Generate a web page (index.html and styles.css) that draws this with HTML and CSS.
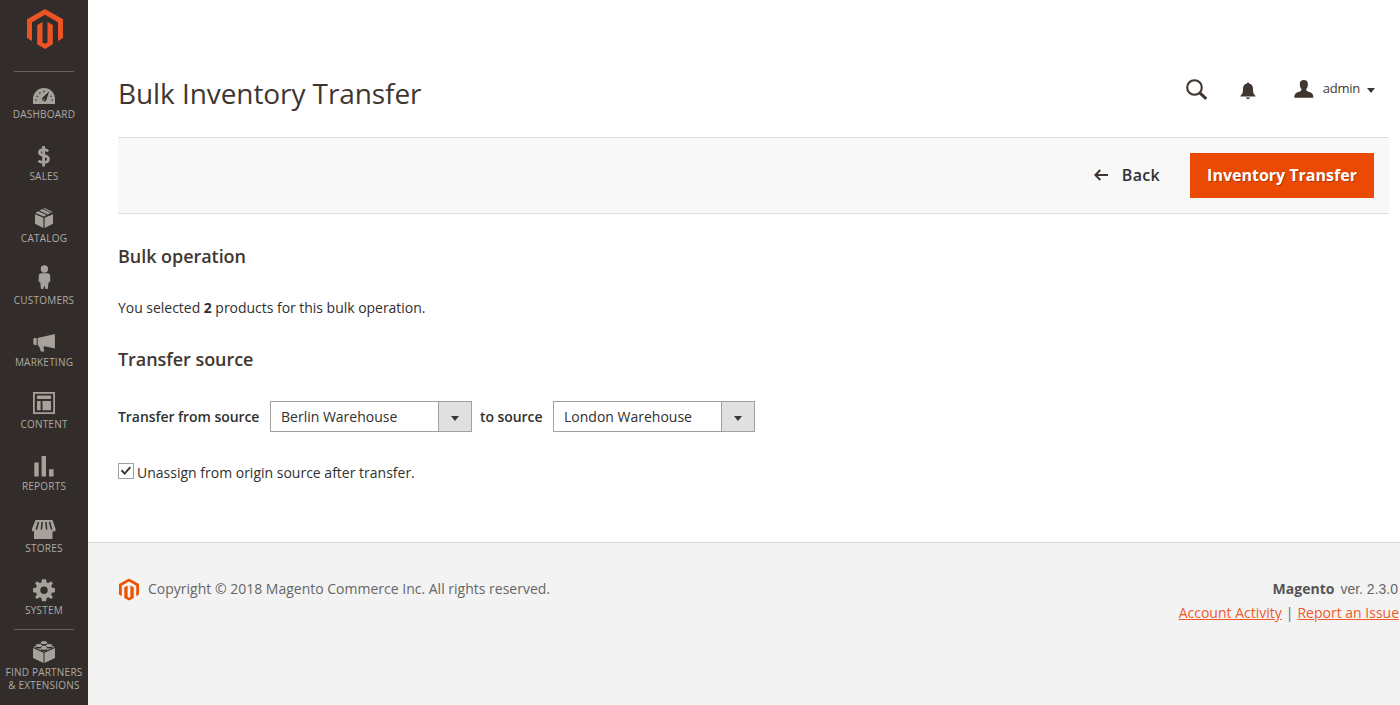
FILE: index.html
```html
<!DOCTYPE html>
<html lang="en">
<head>
<meta charset="utf-8">
<title>Bulk Inventory Transfer</title>
<link rel="stylesheet" href="styles.css">
</head>
<body>
<div class="page">
<aside class="sidebar">
  <a class="logo"><svg width="36" height="40" viewBox="0 0 36 40"><path d="M18 0 0 10.2V29l5 3V13.2L18 5.800l13 7.400V32l5-3V10.200Z"/><path d="m15.500 13-5.300 3.100V35.300L18 40l7.800-4.700V16.100L20.500 13v20.500L18 34.800l-2.500-1.300Z"/></svg></a>
  <nav class="menu">
    <a class="item"><svg viewBox="0 78 88 30"><path d="M33 104v-5a11 11 0 0 1 22 0v5Z"/><g class="cut"><path d="m49.200 91.300-3 9.300a2.400 2.400 0 0 1-4-2.500Z"/><circle cx="36" cy="100" r=".8"/><circle cx="37.200" cy="96.200" r=".8"/><circle cx="39.900" cy="93.100" r=".8"/><circle cx="44" cy="91.500" r=".8"/><circle cx="51" cy="96.200" r=".8"/><circle cx="52.100" cy="100" r=".8"/></g><circle cx="44" cy="99.700" r=".8"/></svg><span>DASHBOARD</span></a>
    <a class="item"><svg viewBox="0 140 88 30"><path class="dollar" d="M48.200 151.300c-1.100-1-2.700-1.600-4.500-1.600-2.700 0-4.200 1-4.200 2.700 0 4.200 8.900 1.800 8.900 6.600 0 2.300-1.800 3.500-4.700 3.500-2 0-4-.6-5.300-1.700M43.600 146v20.500"/></svg><span>SALES</span></a>
    <a class="item"><svg viewBox="0 202 88 30"><path d="m35 214.200 8.400 3.500V228l-8.400-4.200Zm18 0-8.400 3.500V228l8.400-4.200ZM35.300 212.900l3-1.700 8.100 3.900-2.400 1.500Zm4.300-2.500 2.500-1.300 8.300 3.900-2.700 1.400Zm3.800-2 1.300-.5 7.900 4.200-1.300.6Z"/></svg><span>CATALOG</span></a>
    <a class="item"><svg viewBox="0 264 88 30"><circle cx="44.400" cy="269" r="3.700"/><path d="M41.500 273.200h5.800c2 0 2.900 1.200 2.900 3v4.900c0 1-.8 1.500-1.600 1l-.8 6.900h-2.200l-1.200-3.600-1.200 3.600H41l-.8-6.900c-.8.500-1.500 0-1.500-1v-4.900c0-1.800.9-3 2.800-3Z"/></svg><span>CUSTOMERS</span></a>
    <a class="item"><svg viewBox="0 326 88 30"><path d="M33.300 339.500q0-1.400 1.500-1.400h1.900v6.900h-1.900q-1.500 0-1.500-1.400ZM37.700 338l17.200-4v14.400l-11.500-2.500.9 1.100-.9.800 1 3.800h-3.500l-2-5.900h-1.200Z"/></svg><span>MARKETING</span></a>
    <a class="item"><svg viewBox="0 388 88 30"><path fill-rule="evenodd" d="M33 392h22v22H33Zm1.800 1.800v18.400h18.400v-18.400Z"/><path d="M37 395.500h14v3.500H37Zm0 5.500h3.600v9.300H37Zm5.500 0H51v9.300h-8.500Z"/></svg><span>CONTENT</span></a>
    <a class="item"><svg viewBox="0 450 88 30"><path d="M34.300 462.500h4.400v14h-4.400Zm7.300-6.500H46v20.500h-4.400Zm7.400 13.200h4.600v7.300H49Z"/></svg><span>REPORTS</span></a>
    <a class="item"><svg viewBox="0 512 88 30"><path d="M35.500 520h17l3.200 9.200c0 2.500-2 2.500-3.200 2v7.800H34v-7.800c-1.500.5-2.200-.5-2.200-2Z"/><path class="awning" d="m38.500 522-2.200 7.500M42.200 522l-.8 7.500M45.900 522l.8 7.500M49.500 522l2.200 7.500"/></svg><span>STORES</span></a>
    <a class="item"><svg viewBox="0 574 88 30"><g transform="translate(44 590.200)"><path fill-rule="evenodd" d="M-2-11h4l.6 3.200 1.600.7L7-8.900 8.900-7 7.100-4.200l.7 1.600L11-2v4l-3.200.6-.7 1.600L8.900 7 7 8.900 4.200 7.100l-1.600.7L2 11h-4l-.6-3.200-1.600-.7L-7 8.900-8.900 7-7.100 4.200l-.7-1.600L-11 2v-4l3.200-.6.700-1.600L-8.900-7-7-8.900l2.800 1.800 1.600-.7ZM0-3.700A3.700 3.700 0 1 0 0 3.700 3.700 3.700 0 1 0 0-3.700Z"/></g></svg><span>SYSTEM</span></a>
    <a class="item partners"><svg viewBox="0 636 88 30"><path d="m33 648 10.500 4.800V663L33 658Zm22 0-10.500 4.800V663l10.500-5Z"/><path d="m33.400 647 10.600-5 10.600 5-10.600 4.800Z"/><g class="stud"><ellipse class="shade" cx="44" cy="644.200" rx="3.200" ry="1.600"/><ellipse cx="44" cy="642.600" rx="3" ry="1.500"/><ellipse class="shade" cx="38.700" cy="647" rx="3.200" ry="1.600"/><ellipse cx="38.700" cy="645.400" rx="3" ry="1.500"/><ellipse class="shade" cx="49.300" cy="647" rx="3.200" ry="1.600"/><ellipse cx="49.300" cy="645.400" rx="3" ry="1.500"/><ellipse class="shade" cx="44" cy="649.800" rx="3.200" ry="1.600"/><ellipse cx="44" cy="648.200" rx="3" ry="1.500"/></g></svg><span>FIND PARTNERS<br>&amp; EXTENSIONS</span></a>
  </nav>
</aside>
<div class="wrapper">
  <header class="header">
    <h1>Bulk Inventory Transfer</h1>
    <div class="tools">
      <svg class="search" width="22" height="22" viewBox="0 0 22 22"><circle cx="8.500" cy="8.500" r="7.300"/><path d="m13.800 13.800 6.500 6"/></svg>
      <svg class="bell" width="16" height="18" viewBox="0 0 16 18"><path d="M8 .5c.7 0 1.100.4 1.200 1C12 2.200 13 4.300 13 7c0 4 .8 5.300 2.500 6.700v.7H.5v-.7C2.200 12.300 3 11 3 7c0-2.700 1-4.800 3.800-5.500.1-.6.500-1 1.200-1Zm-2 15h4c-.3 1-1 1.700-2 1.700s-1.700-.7-2-1.700Z"/></svg>
      <svg class="user" width="20" height="18" viewBox="0 0 20 18"><path d="M9.800 0c2.800 0 4.300 1.700 4.100 4.500-.1 2-.7 3.600-1.600 4.600-.4 1.300.2 1.900 1.700 2.500 3.200 1.100 5.200 1.500 5.400 6.100H.3c.2-4.600 2.200-5 5.400-6.100 1.500-.6 2-1.200 1.700-2.500-.9-1-1.500-2.600-1.600-4.600C5.600 1.700 7 0 9.800 0Z"/></svg>
      <span class="admin">admin</span><i class="caret"></i>
    </div>
  </header>
  <div class="actions">
    <a class="back"><svg width="14" height="12" viewBox="0 0 14 12"><path d="M14 6H1.500M6.300 1 1.300 6l5 5"/></svg><span>Back</span></a>
    <button class="primary">Inventory Transfer</button>
  </div>
  <main class="content">
    <h2>Bulk operation</h2>
    <p>You selected <b>2</b> products for this bulk operation.</p>
    <h2 class="second">Transfer source</h2>
    <div class="row">
      <label class="from">Transfer from source</label>
      <div class="select"><span>Berlin Warehouse</span><div class="arrow"><i class="caret"></i></div></div>
      <label class="to">to source</label>
      <div class="select"><span>London Warehouse</span><div class="arrow"><i class="caret"></i></div></div>
    </div>
    <label class="unassign"><span class="box"><svg width="14" height="14" viewBox="0 0 14 14"><path d="m2.500 6.300 3.200 3.300 5.600-6.400"/></svg></span><span>Unassign from origin source after transfer.</span></label>
  </main>
  <footer class="footer">
    <div class="copy"><svg width="20" height="23" viewBox="0 0 36 40"><path d="M18 0 0 10.200V29l5 3V13.200L18 5.800l13 7.400V32l5-3V10.200Z"/><path d="m15.500 13-6 3.100V35.300L18 40l8.500-4.700V16.100l-6-3.100v20.500L18 34.800l-2.500-1.300Z"/></svg><span>Copyright © 2018 Magento Commerce Inc. All rights reserved.</span></div>
    <div class="legal"><div><strong>Magento</strong><span class="version">ver. 2.3.0</span></div><div class="links"><a>Account Activity</a><span class="bar">|</span><a>Report an Issue</a></div></div>
  </footer>
</div>
</div>
</body>
</html>
```
FILE: styles.css
```css
* { box-sizing: border-box; }
body { margin: 0; font: 14px/20px "Open Sans", sans-serif; color: #303030; background: #fff; }
h1, h2, p { margin: 0; }
svg { display: block; flex: none; }
.page { display: flex; width: 1400px; height: 705px; overflow: hidden; }
.sidebar { width: 88px; flex: none; background: #322d2a; color: #aeaaa4; }
.logo { display: flex; margin: 0 14px; padding: 8.500px 0 0 12.500px; height: 72px; border-bottom: 1px solid #66615d; }
.logo svg, .copy svg { fill: #eb5202; }
.logo svg { fill: #eb5424; }
.menu { padding-top: 6px; }
.item { display: block; height: 62px; font-size: 10px; line-height: 13px; letter-spacing: .22px; text-align: center; white-space: nowrap; }
.item svg { width: 88px; height: 30px; overflow: visible; fill: #a6a19b; }
.item .cut { fill: #322d2a; }
.item .dollar { fill: none; stroke: #a6a19b; stroke-width: 2.8; }
.item .awning { stroke: #322d2a; stroke-width: 1.5; }
.item .stud .shade { fill: #322d2a; }
.partners { position: relative; }
.partners::before { content: ""; position: absolute; left: 14px; right: 14px; top: -7px; height: 1px; background: #66615d; }
.wrapper { flex: 1; display: flex; flex-direction: column; min-width: 0; }
.header { height: 137px; padding: 73px 25px 0 30px; display: flex; justify-content: space-between; align-items: flex-start; }
h1 { font-size: 28px; line-height: 40px; font-weight: 400; letter-spacing: -.08px; color: #41362f; }
.tools { display: flex; align-items: center; height: 30px; }
.tools svg { fill: #41362f; }
.tools .search { margin: 4px 32px 0 0; fill: none; stroke: #41362f; stroke-width: 2.1; }
.search .handle, .search path { stroke-width: 3; }
.bell { margin: 5px 38px 0 0; }
.user { margin: 1px 9px 0 0; }
.admin { font-size: 13px; letter-spacing: -.25px; color: #41362f; }
.caret { width: 0; height: 0; border: 4px solid transparent; border-top: 5px solid #41362f; border-bottom: 0; }
.tools .caret { margin: 4px 0 0 7px; }
.actions { height: 77px; margin: 0 11px 0 30px; padding-right: 15px; display: flex; justify-content: flex-end; align-items: center; background: #f8f8f8; border: solid #dedede; border-width: 1px 0; font-size: 16px; font-weight: 600; }
.back { display: flex; align-items: center; gap: 14px; margin: -2px 30px 0 0; color: #303030; letter-spacing: .3px; }
.back svg { margin-top: 1px; fill: none; stroke: #41362f; stroke-width: 2; }
.primary { width: 184px; height: 45px; padding: 0 0 2px; border: 0; background: #eb4a05; color: #fff; font: 700 16px/20px "Open Sans", sans-serif; text-shadow: 1px 1px 0 rgba(0,0,0,.25); }
.content { height: 328px; padding: 30px 30px 0; }
h2 { font-size: 18px; line-height: 24px; font-weight: 600; letter-spacing: -.05px; color: #41362f; }
.content p { margin-top: 30px; letter-spacing: -.03px; }
.second { margin-top: 29px; }
.row { display: flex; align-items: center; height: 31px; margin-top: 30px; }
.row label { font-weight: 600; letter-spacing: -.06px; }
.from { width: 152px; }
.to { margin-left: 8px; width: 73px; }
.select { width: 202px; height: 31px; border: 1px solid #a0a0a0; display: flex; justify-content: space-between; align-items: center; padding-left: 10px; }
.arrow { width: 33px; height: 29px; border-left: 1px solid #a0a0a0; background: #e0e0e0; display: flex; align-items: center; justify-content: center; padding-top: 3px; }
.unassign { display: flex; align-items: flex-start; gap: 3px; margin-top: 31px; }
.box { width: 16px; height: 16px; border: 1px solid #a0a0a0; }
.box path { fill: none; stroke: #41362f; stroke-width: 2; }
.footer { flex: 1; border-top: 1px solid #d6d6d6; background: #f3f3f3; display: flex; justify-content: space-between; padding: 34px 1px 0 31px; color: #666; }
.copy { display: flex; align-items: center; gap: 9px; height: 24px; }
.legal { text-align: right; line-height: 24px; }
.legal > div:first-child { padding-right: 1px; }
.legal strong { font-weight: 700; color: #555; }
.version { margin-left: 6px; font-family: "Liberation Sans", sans-serif; }
.links a { color: #ef5a2a; text-decoration: underline; }
.bar { margin: 0 4px; }
```
